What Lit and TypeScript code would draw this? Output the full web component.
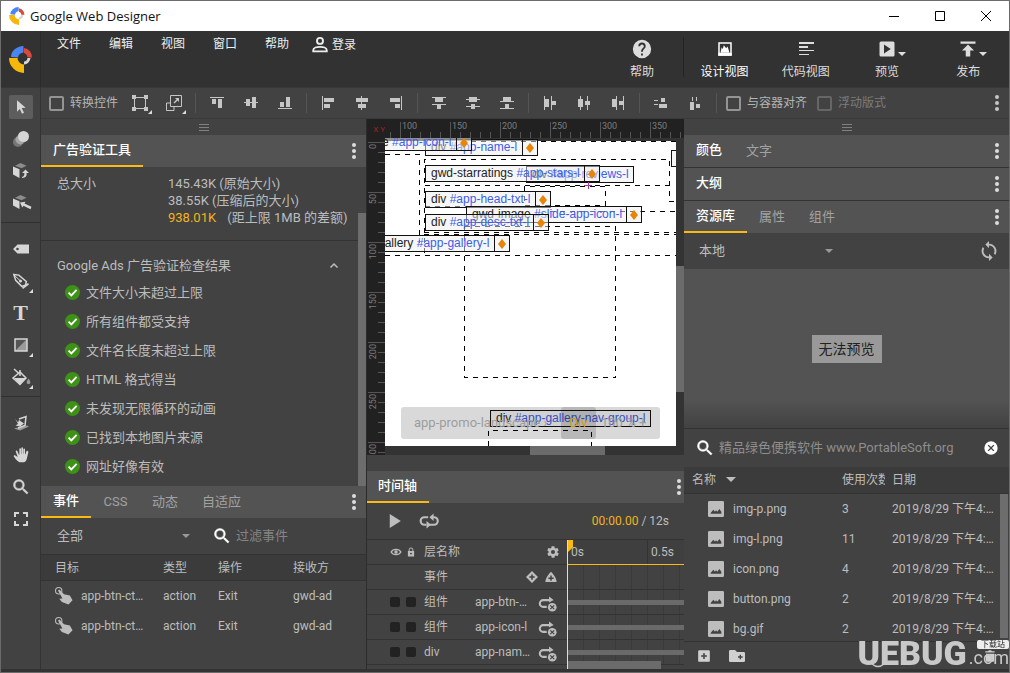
import { LitElement, html, svg, css, nothing } from "lit";
import { customElement, state } from "lit/decorators.js";

const block = (d: string) => svg`<path d=${d} shape-rendering="crispEdges"></path>`;

const glyphs16: Record<string, unknown> = {
  alignTop: block("M1 2h14v1H1zM3 4h4v5H3zM9 4h4v9H9z"),
  alignMiddle: block("M1 7h14v1H1zM3 4h4v7H3zM9 2h4v11H9z"),
  alignBottom: block("M1 13h14v1H1zM3 7h4v5H3zM9 2h4v10H9z"),
  alignLeft: block("M2 1h1v14H2zM4 3h10v4H4zM4 9h6v4H4z"),
  alignCenter: block("M7 1h1v14H7zM2 3h12v4H2zM4 9h8v4H4z"),
  alignRight: block("M13 1h1v14h-1zM2 3h10v4H2zM7 9h5v4H7z"),
  distTop: block("M1 2h14v1H1zM4 3h8v4H4zM1 9h14v1H1zM6 10h4v4H6z"),
  distMiddle: block("M1 4h14v1H1zM4 2h8v5H4zM1 11h14v1H1zM6 9h4v5H6z"),
  distBottom: block("M4 2h8v4H4zM1 6h14v1H1zM6 9h4v4H6zM1 13h14v1H1z"),
  distLeft: block("M2 1h1v14H2zM3 4h4v8H3zM9 1h1v14H9zM10 6h4v4h-4z"),
  distCenter: block("M4 1h1v14H4zM2 4h5v8H2zM11 1h1v14h-1zM9 6h5v4H9z"),
  distRight: block("M2 4h4v8H2zM6 1h1v14H6zM9 6h4v4H9zM13 1h1v14h-1z"),
  spaceV: block("M1 5h4v1H1zM1 9h4v1H1zM8 3h4v4H8zM6 9h8v4H6z"),
  spaceH: block("M3 7h4v8H3zM9 9h4v4H9zM5 2h1v4H5zM9 2h1v4H9z"),
  transform: svg`<path d="M2.500 2.500h11v11h-11z" fill="none" stroke="currentColor"></path>${block("M0 0h4v4H0zM12 0h4v4h-4zM0 12h4v4H0zM12 12h4v4h-4z")}`,
  resize: svg`<path d="M4.500.5h11v11h-11zM4.500 8H.5v7.500H8v-4" fill="none" stroke="currentColor"></path><path d="M9 3h4v4l-1.500-1.500L8.500 8.500l-1-1 3-3z"></path>`,
  gradient: svg`<path d="M2 2h12v12H2z" fill="#555" stroke="currentColor" stroke-width="1.500"></path><path d="M14 2v12H2z" opacity=".55"></path>`,
  fullscreen: svg`<path d="M2 6V2h4M10 2h4v4M14 10v4h-4M6 14H2v-4" fill="none" stroke="currentColor" stroke-width="2"></path>`,
  ball: svg`<circle cx="5" cy="11" r="5" opacity=".35"></circle><circle cx="7.500" cy="8.500" r="5" opacity=".5"></circle><circle cx="10.500" cy="5.500" r="5.500"></circle>`,
  cube: svg`<path d="M7.500 0l6 2.700-5 2.500L2 2.700z" opacity=".5"></path><path d="M0 3.500l6.500 2.700V15L0 11.500z"></path><path d="M9 15c4-.2 5-2 4.500-5H16l-3.500-3.500L9 10h2.300c.3 2-.3 3.500-2.300 4z"></path>`,
  cubeArrow: svg`<path d="M7.500 0l6 2.700-5 2.500L2 2.700z" opacity=".5"></path><path d="M0 3.500l6.500 2.700V14L0 10.500z"></path><path d="M7 7.500l5.500-.8-1 1.800 7 3.300-1 2.500-7-3.500L9.300 12.500z"></path>`,
  tag: svg`<path d="M4.500 3.500H16v9H4.500L0 8zM4.500 6.700a1.300 1.300 0 100 2.600 1.300 1.300 0 000-2.600z" fill-rule="evenodd"></path>`,
  pen: svg`<path d="M.8 1.500l5 .6 7.500 6.400-.6 3.400-4 1.500-6-6z" fill="none" stroke="currentColor" stroke-width="1.500"></path><path d="M1 2l6 5.500" stroke="currentColor"></path><circle cx="7.500" cy="8" r="1.500"></circle><path d="M9 14.500l6-4.500 1 1.500-6 4.500z"></path>`,
  bucket: svg`<path d="M1 0l5.500 5M7 3l6 6-6 6.500L0 9z" fill="none" stroke="currentColor" stroke-width="1.500"></path><path d="M1 9h12l-6 6.500z"></path><path d="M7 1v6" stroke="currentColor" stroke-width="1.500"></path><path d="M15.500 9.500c3 4 1.800 5.500 0 5.500s-3-1.500 0-5.500z" opacity=".6"></path>`,
  threeD: svg`<path d="M6 4l7-2.500-1 9L5 13" fill="none" stroke="currentColor" stroke-width="1.500"></path><path d="M2 3.500l3 4 1-2.500 5 3.500-4 3-4.500-1L5 9z"></path><path d="M1 13.500l4-1 9-2 2 1-9 4z" opacity=".6"></path>`,
  check: svg`<circle cx="8" cy="8" r="8" fill="#3d9116"></circle><path d="M3.800 8.200l3 3 5.600-6" fill="none" stroke="#fff" stroke-width="2"></path>`,
  tap: svg`<circle cx="3.500" cy="3.500" r="3" fill="none" stroke="currentColor"></circle><path d="M2.800 3.200l1.400-.8 4.300 4.400L14 8l2.500 4.500-3.800 4-6.200-2.500-2.500-3 3-.2z"></path>`,
  eye: svg`<path d="M1.500 8C4 3.300 12 3.300 14.500 8 12 12.700 4 12.700 1.500 8z" fill="none" stroke="currentColor" stroke-width="1.800"></path><circle cx="8" cy="8" r="2.300"></circle>`,
  lock: svg`<path d="M5 7V4.500a3 3 0 016 0V7" fill="none" stroke="currentColor" stroke-width="1.600"></path><path d="M3 6.500h10V15H3zM8 9a1.500 1.500 0 100 3 1.500 1.500 0 000-3z" fill-rule="evenodd"></path>`,
  diamondAdd: svg`<path d="M8 0l8 8-8 8-8-8zM7 4.500V7H4.500v2H7v2.500h2V9h2.500V7H9V4.500z" fill-rule="evenodd"></path>`,
  cloudAdd: svg`<path d="M8 1c2 2 7 7.500 7.500 13.500H.5C1 8.500 6 3 8 1zM7 6v2.500H4.500v2H7V13h2v-2.500h2.500v-2H9V6z" fill-rule="evenodd"></path>`,
};

const glyphs24: Record<string, unknown> = {
  search: svg`<path d="M15.500 14h-.8l-.3-.3A6.500 6.500 0 0016 9.500 6.500 6.500 0 109.500 16c1.600 0 3.100-.6 4.200-1.600l.3.300v.8l5 5 1.500-1.500-5-5zm-6 0a4.500 4.500 0 110-9 4.500 4.500 0 010 9z" stroke="currentColor" stroke-width=".6"></path>`,
  help: svg`<path d="M12 2a10 10 0 100 20 10 10 0 000-20zm1 17h-2v-2h2v2zm2.070-7.750l-.9.920C13.450 12.900 13 13.500 13 15h-2v-.5c0-1.100.45-2.100 1.170-2.830l1.240-1.260c.37-.36.590-.86.590-1.410a2 2 0 10-4 0H8a4 4 0 118 0c0 .880-.36 1.680-.93 2.250z"></path>`,
  person: svg`<path d="M3 20.500v-1.500c0-3 5-4.500 9-4.500s9 1.500 9 4.500v1.500z" fill="none" stroke="currentColor" stroke-width="2.500"></path><circle cx="12" cy="6.500" r="4" fill="none" stroke="currentColor" stroke-width="2.500"></circle>`,
  design: svg`<path d="M3 3h18v18H3zM5 5v14h14V5z" fill-rule="evenodd"></path><path d="M6 17l1.500-7L9 12l1.500-5 3 4 2-2.500L18 17z"></path><path d="M3 17h18v4H3z"></path>`,
  code: block("M2 3h20v2H2zM2 8h13v2H2zM2 13h20v2H2zM2 18h14v2H2z"),
  play: svg`<path d="M4 2h16a2 2 0 012 2v16a2 2 0 01-2 2H4a2 2 0 01-2-2V4a2 2 0 012-2zm4 4v12l9-6z" fill-rule="evenodd"></path>`,
  publish: svg`<path d="M2 2h20v3H2zM4 14h5v8h6v-8h5l-8-8z"></path>`,
  cursor: svg`<path d="M6 2l13 11-6 .5 3.500 7-3 1.500-3.200-7L6 19z"></path>`,
  hand: svg`<path d="M22 6c-.8-.5-1.700-.2-2 .6L18.500 11H18V3.500c0-1.700-2.400-1.700-2.500 0V10H15V1.800c0-1.800-2.500-1.800-2.500 0V10H12V3c0-1.700-2.500-1.700-2.500 0v8.500H9L6.500 6c-.7-1.600-3-.7-2.300 1L7 15l-4-2.500c-1.200-.7-2.500.7-1.700 1.800C4 18 7 23 11.500 23H15c4 0 5.500-3.500 6-6.500l2-8.500c.2-.9-.2-1.600-1-2z"></path>`,
  playSolid: svg`<path d="M3 0v24l19-12z"></path>`,
  loop: svg`<path d="M11 7.500H6.500a4.300 4.300 0 000 9H9M13 16.500h5a4.300 4.300 0 000-9H16" fill="none" stroke="currentColor" stroke-width="2.600"></path><path d="M8 12l5.500 4.500L8 21zM16.500 3v9L11.500 7.500z" transform="translate(1 0)"></path>`,
  gear: svg`<path d="M19.400 13c0-.3.100-.6.100-1s0-.7-.1-1l2.100-1.600c.2-.2.2-.4.100-.6l-2-3.500c-.1-.2-.4-.3-.6-.2l-2.500 1c-.5-.4-1.100-.7-1.700-1L14.500 2.400c0-.2-.2-.4-.5-.4h-4c-.2 0-.5.200-.5.400L9.100 5.100c-.6.200-1.200.6-1.700 1l-2.500-1c-.2-.1-.5 0-.6.200l-2 3.500c-.1.200-.1.500.1.600L4.600 11c-.1.700-.1 1.300 0 2l-2.100 1.600c-.2.200-.2.400-.1.600l2 3.500c.1.200.4.300.6.200l2.500-1c.5.400 1.100.7 1.700 1l.4 2.700c0 .2.200.4.500.4h4c.2 0 .5-.2.500-.4l.4-2.700c.6-.2 1.200-.6 1.700-1l2.500 1c.2.100.5 0 .6-.2l2-3.500c.1-.2.100-.5-.1-.6zM12 15.500a3.500 3.500 0 110-7 3.500 3.500 0 010 7z" fill-rule="evenodd"></path>`,
  unlink: svg`<path d="M11 17.500H6.500a4 4 0 010-8.500H16" fill="none" stroke="currentColor" stroke-width="2.600"></path><path d="M14 4.500L20 9h-6z"></path><path d="M14 5l5 4-5 3z"></path><circle cx="18" cy="18" r="5.500"></circle><path d="M15.500 15.500l5 5m0-5l-5 5" stroke="#424242" stroke-width="1.400"></path>`,
  sync: svg`<path d="M12 4V1L8 5l4 4V6a6 6 0 015.300 8.800l1.500 1.500A8 8 0 0012 4zm0 14a6 6 0 01-5.300-8.800L5.200 7.700A8 8 0 0012 20v3l4-4-4-4z"></path>`,
  clear: svg`<path d="M12 2a10 10 0 100 20 10 10 0 000-20zm5 13.600L15.600 17 12 13.400 8.400 17 7 15.600l3.600-3.600L7 8.400 8.400 7l3.600 3.600L15.600 7 17 8.400 13.400 12z"></path>`,
  image: svg`<path d="M2 0h20a2 2 0 012 2v20a2 2 0 01-2 2H2a2 2 0 01-2-2V2a2 2 0 012-2zM4 19h16v-3l-3-4-3 4-2-2-1.500 2L8 13l-4 5z" fill-rule="evenodd"></path>`,
  add: svg`<path d="M4 2h16a2 2 0 012 2v16a2 2 0 01-2 2H4a2 2 0 01-2-2V4a2 2 0 012-2zm6.700 5v3.700H7v2.600h3.700V17h2.600v-3.700H17v-2.600h-3.700V7z" fill-rule="evenodd"></path>`,
  folder: svg`<path d="M2 3h7l3 3h10a2 2 0 012 2v11a2 2 0 01-2 2H2a2 2 0 01-2-2V5a2 2 0 012-2zm14 7v2.500h-2.500v2H16V17h2v-2.500h2.500v-2H18V10z" fill-rule="evenodd"></path>`,
  trash: svg`<path d="M5 8h14v12a2 2 0 01-2 2H7a2 2 0 01-2-2zM20 4h-5l-1-2h-4L9 4H4v2h16z"></path>`,
};

const icon = (name: string, size = 16) => {
  const small = name in glyphs16;
  return html`<svg class="icon" width=${size} height=${size} viewBox=${small ? "0 0 16 16" : "0 0 24 24"} fill="currentColor" aria-hidden="true">${small ? glyphs16[name] : glyphs24[name]}</svg>`;
};

const logo = (w: number, h: number) => html`<svg class="icon" width=${w} height=${h} viewBox="0 0 24 27" aria-hidden="true">
  <path d="M2 11A13 11 0 0 1 14.500 0V6.500A6 6 0 0 0 9 11.500z" fill="#4a86f0"></path>
  <path d="M15 2A9 9 0 0 1 23 11.500H18.500A5 5 0 0 0 15 7z" fill="#dd4839"></path>
  <path d="M18.500 12H21.500A7 7 0 0 1 15 18.500V15.500A4 4 0 0 0 18.500 12z" fill="#d5d5d5"></path>
  <path d="M0 12H8.500A6.500 6.500 0 0 0 15 18.500V27A15 15 0 0 1 0 12z" fill="#f5b80a"></path></svg>`;

const toolGroups = [
  [["选择", "cursor"], ["动作路径", "ball"], ["3D 旋转", "cube"], ["3D 平移", "cubeArrow"]],
  [["标记", "tag"], ["钢笔", "pen", "more"], ["文本", "T"], ["形状", "gradient", "more"], ["填充", "bucket", "more"]],
  [["3D 舞台", "threeD"], ["手形", "hand"], ["缩放", "search"], ["全屏", "fullscreen"]],
];

const alignGroups = [
  ["alignTop", "alignMiddle", "alignBottom"],
  ["alignLeft", "alignCenter", "alignRight"],
  ["distTop", "distMiddle", "distBottom"],
  ["distLeft", "distCenter", "distRight"],
  ["spaceV", "spaceH"],
];

const checks = ["文件大小未超过上限", "所有组件都受支持", "文件名长度未超过上限", "HTML 格式得当", "未发现无限循环的动画", "已找到本地图片来源", "网址好像有效"];

const files = [["img-p.png", 3], ["img-l.png", 11], ["icon.png", 4], ["button.png", 2], ["bg.gif", 2]];

const layers = [["组件", "app-btn-cta-l"], ["组件", "app-icon-l"], ["div", "app-name-l"]];

/* Element tags on the stage; x is the left edge and w the width of the name cell. */
const tags: { x: number; y: number; w: number; tag: string; id: string; key?: boolean }[] = [
  { x: 40, y: 1, w: 97, tag: "div", id: "#app-name-l", key: true },
  { x: -61, y: -4, w: 132, tag: "gwd-image", id: "#app-icon-l", key: true },
  { x: 141, y: 28, w: 108, tag: "div", id: "#app-reviews-l" },
  { x: 40, y: 27, w: 159, tag: "gwd-starratings", id: "#app-stars-l", key: true },
  { x: 40, y: 53, w: 110, tag: "div", id: "#app-head-txt-l", key: true },
  { x: 81, y: 68, w: 160, tag: "gwd-image", id: "#slide-app-icon-l", key: true },
  { x: 40, y: 76, w: 108, tag: "div", id: "#app-desc-txt-l", key: true },
  { x: -39, y: 97, w: 148, tag: "gwd-gallery", id: "#app-gallery-l", key: true },
  { x: 105, y: 272, w: 161, tag: "div", id: "#app-gallery-nav-group-l" },
  { x: 286, y: 12, w: 60, tag: "", id: "" },
];

const range = (n: number) => Array.from({ length: n }, (_, i) => i);

@customElement("app-root")
export class AppRoot extends LitElement {
  @state() private tool = "选择";

  static styles = css`
    :host {
      display: flex; flex-direction: column; height: 100vh; min-height: 600px; box-sizing: border-box;
      border: 1px solid #6b6b6b; padding-bottom: 3px; overflow: hidden; background: #333;
      color: #bdbdbd; font: 12px/16px Roboto, "Noto Sans CJK SC", sans-serif;
    }
    * { box-sizing: border-box; }
    button, input, select { font: inherit; color: inherit; background: none; border: 0; padding: 0; margin: 0; border-radius: 0; }
    button { display: flex; align-items: center; justify-content: center; }
    input:focus, select:focus { outline: none; }
    .icon { display: block; flex: none; overflow: visible; }
    ul { list-style: none; margin: 0; padding: 0; }
    h1, h2 { margin: 0; font: inherit; }

    .titlebar { display: flex; align-items: center; height: 30px; flex: none; background: #fff; color: #111; padding-left: 8px; font: 13px/30px "Open Sans", sans-serif; }
    .titlebar h1 { flex: 1; margin-left: 5px; }
    .titlebar button { width: 46px; height: 30px; }

    .header { display: flex; height: 56px; flex: none; background: #323232; color: #eee; }
    .brand { width: 40px; display: flex; align-items: center; justify-content: center; border-right: 1px solid #2a2a2a; }
    .menu { display: flex; flex: 1; padding: 3px 0 0 3px; align-items: flex-start; }
    .menu button { height: 20px; padding: 0 14px 0 12px; width: 52px; white-space: nowrap; }
    .menu .login { width: auto; gap: 3px; height: 22px; padding-left: 7px; }
    .view { flex-direction: column; width: 82px; gap: 5px; padding-top: 1px; color: #ddd; }
    .view.on { color: #fff; }
    .glyph { display: flex; height: 20px; align-items: center; position: relative; }
    .glyph .drop { position: absolute; left: 20px; top: 13px; }
    .drop { width: 0; border: 4px solid transparent; border-top-color: currentColor; border-bottom: 0; flex: none; }
    .views { display: flex; width: 325px; }
    .views .view { flex: 1; width: auto; }
    .rule { width: 1px; background: #242424; margin: 6px 0 10px; }

    .workspace { display: grid; grid-template-columns: 40px minmax(0, 1fr); flex: 1; min-height: 0; background: #424242; }
    .tools { border-right: 1px solid #333; border-top: 1px solid #373737; min-height: 0; overflow: hidden; color: #d6d6d6; }
    .group { display: flex; flex-direction: column; align-items: center; padding: 3px 0; }
    .group + .group { border-top: 1px solid #303030; padding: 10px 0 3px; }
    .tool { position: relative; width: 24px; height: 24px; margin: 4px 0; border-radius: 2px; }
    .tool.on { background: #5d5d5d; }
    .tool.more::after { content: ""; position: absolute; right: 0; bottom: 0; border: 2px solid; border-color: transparent #ddd #ddd transparent; }
    .serif { font: bold 22px/24px "Liberation Serif", serif; }
    .main { display: flex; flex-direction: column; min-width: 0; min-height: 0; }

    .toolbar { display: flex; align-items: center; height: 32px; flex: none; border-top: 1px solid #383838; border-bottom: 1px solid #3a3a3a; color: #c6c6c6; padding-right: 5px; }
    .toolbar label { display: flex; align-items: center; gap: 6px; white-space: nowrap; padding-left: 10px; color: #b5b5b5; }
    .toolbar label.first { width: 82px; padding-left: 8px; }
    .toolbar label.near { padding-left: 5px; }
    .toolbar label.off { color: #7c7c7c; }
    .toolbar input { appearance: none; width: 15px; height: 15px; border: 2px solid #949494; border-radius: 2px; flex: none; }
    .toolbar label.off input { border-color: #666; }
    .toolbar button { width: 34px; height: 30px; position: relative; flex: none; }
    .corner::after { content: ""; position: absolute; right: 5px; bottom: 4px; border: 2px solid; border-color: transparent #ddd #ddd transparent; }
    .sep { width: 9px; height: 20px; flex: none; background: linear-gradient(#555, #555) 4px 0 / 1px 100% no-repeat; }
    .toolbar .dots, .tabs .dots { margin-left: auto; width: 14px; }

    .panels { display: grid; grid-template-columns: 325px minmax(0, 1fr) 325px; flex: 1; min-height: 0; }
    .col { display: flex; flex-direction: column; min-height: 0; min-width: 0; }
    .center { border-left: 1px solid #2c2c2c; }
    .grip { height: 16px; flex: none; display: flex; align-items: center; justify-content: center; color: #808080; }
    .tabs { display: flex; height: 32px; flex: none; background: #535353; padding-right: 5px; font-size: 13px; }
    .tabs + .tabs { border-top: 1px solid #333; height: 33px; }
    .tabs button { color: #a2a2a2; padding: 0 12px; min-width: 49px; white-space: nowrap; }
    .tabs .on { color: #fff; font-weight: 500; border-bottom: 2px solid #fdb913; }
    .tabs.plain .on { border-color: transparent; }
    .tabs .dots { padding: 0; min-width: 0; color: #ddd; }

    .verify { display: flex; flex: 1; min-height: 0; font-size: 13px; overflow: hidden; }
    .scroller { flex: 1; min-width: 0; }
    .bar { width: 8px; flex: none; background: #6d6d6d; margin-top: 46px; }
    .sizes { display: grid; grid-template-columns: 111px 1fr; margin: 0; padding: 8px 0 14px 16px; line-height: 17px; border-bottom: 1px solid #333; white-space: nowrap; }
    .sizes dd { margin: 0; }
    .warn { color: #f0b41c; }
    .warn + span { margin-left: 8px; }
    .section { display: flex; align-items: center; justify-content: space-between; height: 37px; padding: 12px 20px 0 16px; }
    .checks li { display: flex; align-items: center; gap: 6px; height: 29px; padding-left: 24px; }
    .events { flex: none; height: 183px; }
    .filter { display: flex; align-items: center; height: 36px; flex: none; padding: 0 18px 0 16px; font-size: 13px; }
    .pick { display: flex; align-items: center; width: 133px; flex: none; }
    .pick select { appearance: none; flex: 1; width: 100%; margin-right: -8px; }
    .pick .drop { pointer-events: none; color: #999; }
    .find { display: flex; align-items: center; flex: 1; min-width: 0; gap: 4px; color: #fff; margin-left: 22px; }
    .find input { flex: 1; width: 0; min-width: 0; color: #8e8e8e; }
    .find input::placeholder { color: #858585; opacity: 1; }

    table { border-collapse: collapse; table-layout: fixed; width: 100%; flex: none; }
    th { font-weight: normal; text-align: left; padding: 0; height: 26px; background: #3b3b3b; border-bottom: 1px solid #333; white-space: nowrap; overflow: hidden; }
    td { padding: 0; height: 30px; white-space: nowrap; overflow: hidden; text-overflow: ellipsis; }
    .events table { border-top: 1px solid #333; }
    .events th:first-child, .events td:first-child { padding-left: 14px; width: 122px; }
    .c55 { width: 55px; } .c75 { width: 75px; }
    .cell { display: flex; align-items: center; gap: 9px; }
    .name { overflow: hidden; text-overflow: ellipsis; white-space: nowrap; }
    .events .name { width: 64px; }

    .stage { display: grid; grid-template: 19px minmax(0, 1fr) 9px / 18px minmax(0, 1fr) 8px; flex: 1; min-height: 0; background: #333; }
    .origin { background: #212121; color: #a32222; font-size: 8px; line-height: 22px; text-align: right; }
    .ruler { background: #212121; overflow: hidden; }
    .ruler.top { grid-column: 2 / 4; }
    .ruler.side { grid-row: 2 / 4; }
    .ruler svg { display: block; }
    .ruler text { font: 9px Roboto, sans-serif; fill: #7d7d7d; }
    .tick { stroke: #555; shape-rendering: crispEdges; }
    .canvas { position: relative; overflow: hidden; background: linear-gradient(#333 3px, #fff 3px); }
    .outline { position: absolute; left: 0; top: 0; fill: none; stroke: #000; stroke-dasharray: 5 5; shape-rendering: crispEdges; }
    .cross { stroke: #a03aa0; stroke-dasharray: none; }
    .tag { position: absolute; display: flex; height: 17px; border: 1px solid #111; background: rgba(238, 238, 238, .5); font: 12px/15px "Liberation Sans", sans-serif; color: #222; white-space: nowrap; }
    .tag .text { flex: 1; padding-left: 5px; }
    .tag em { font-style: normal; color: #3c5ee8; }
    .tag .key { width: 15px; border-left: 1px solid #111; display: flex; align-items: center; justify-content: center; color: #e88407; }
    .crumbs { position: absolute; left: 16px; right: 16px; bottom: 7px; height: 32px; display: flex; align-items: center; background: rgba(0, 0, 0, .15); border-radius: 3px; color: #9d9d9d; font-size: 13px; padding-left: 13px; white-space: nowrap; }
    .crumbs .path { width: 147px; }
    .crumbs .now { width: 35px; line-height: 32px; background: rgba(0, 0, 0, .15); text-align: center; color: #d59b12; border-radius: 3px; margin-right: 5px; }
    .vscroll { padding-top: 128px; }
    .vscroll i { display: block; height: 126px; background: #6b6b6b; }
    .hscroll { grid-column: 2 / 4; padding-left: 145px; }
    .hscroll i { display: block; height: 9px; width: 75px; background: #6b6b6b; }

    .timeline { height: 214px; flex: none; padding-top: 16px; overflow: hidden; }
    .timeline .tabs { padding-right: 0; }
    .timeline .tabs .on { padding-left: 11px; }
    .timeline .tabs .dots { width: 10px; }
    .transport { display: flex; align-items: center; height: 37px; flex: none; padding: 0 15px 0 21px; gap: 17px; border-bottom: 1px solid #333; }
    .time { margin-left: auto; }
    .tracks { display: grid; grid-template-columns: 200px minmax(0, 1fr); flex: 1; min-height: 0; overflow: hidden; }
    .layer { display: grid; grid-template-columns: 16px 18px 51px 57px 1fr; align-items: center; height: 25px; padding: 0 10px 0 23px; border-bottom: 1px solid #333; }
    .layer.wide { grid-template-columns: 16px 18px 1fr auto; padding-right: 7px; }
    .acts { display: flex; gap: 7px; padding-right: 3px; }
    .box { width: 10px; height: 10px; border-radius: 2px; background: #222; }
    .layer .name { width: 57px; }
    .layer > :last-child { justify-self: end; }
    .lanes { position: relative; overflow: hidden; border-left: 1px solid #ddd; }
    .scale { display: flex; height: 25px; border-bottom: 1px solid #fdb913; line-height: 24px; padding-left: 3px; background: linear-gradient(#333, #333) 79px 0 / 1px 100% no-repeat #3f3f3f; }
    .scale span { width: 80px; flex: none; }
    .lane { display: flex; align-items: center; height: 25px; border-bottom: 1px solid #333; background: repeating-linear-gradient(90deg, transparent 0 15px, #3a3a3a 15px 16px); }
    .lane i { flex: 1; height: 5px; background: #6a6a6a; margin-top: 1px; }
    .playhead { position: absolute; left: 0; top: 0; width: 5px; height: 12px; background: #fdb913; clip-path: polygon(0 0, 100% 0, 100% 60%, 0 100%); }
    .lanes .thumb { position: absolute; left: 0; bottom: 0; height: 8px; width: 93px; background: #6b6b6b; }

    .source { display: flex; align-items: center; height: 36px; flex: none; padding: 0 9px 0 15px; font-size: 13px; justify-content: space-between; }
    .source .pick { width: 134px; }
    .preview { display: flex; align-items: center; justify-content: center; height: 160px; flex: none; background: linear-gradient(#535353 82%, #424242); border-bottom: 1px solid #333; }
    .preview span { background: #999; color: #222; font-size: 14px; line-height: 28px; padding: 0 7px; }
    .lookup { display: flex; align-items: center; height: 38px; flex: none; padding: 0 10px 0 11px; font-size: 13px; }
    .lookup .find { margin: 0; }
    .lookup button { color: #fff; }
    .files { flex: 1; min-height: 0; display: flex; flex-direction: column; overflow: hidden; }
    .files .cname { width: 158px; } .files .cuse { width: 43px; } .files .cgap { width: 7px; }
    .files th:first-child { padding-left: 8px; }
    .files td:first-child { padding-left: 24px; }
    .files .drop { border-width: 5px 5px 0; margin-left: 1px; }
    .rows { display: flex; flex: 1; min-height: 0; overflow: hidden; }
    .rows table { flex: 1; width: 0; align-self: flex-start; }
    .rows i { width: 8px; margin: 0 1px 3px 0; background: #6d6d6d; }
    .rows .cdate { padding-right: 6px; }
    .footer { display: flex; align-items: center; height: 28px; flex: none; border-top: 1px solid #333; gap: 18px; padding: 0 12px 0 13px; color: #d0d0d0; }
    .footer button:last-child { margin-left: auto; }
    .watermark { position: fixed; right: 1px; bottom: 6px; display: flex; align-items: flex-end; gap: 2px; height: 30px; color: #c9c9c9; pointer-events: none; }
    .watermark b { font: 900 34px/28px Roboto, sans-serif; }
    .suffix { display: flex; flex-direction: column; align-items: flex-end; }
    .suffix small { background: #eee; color: #222; font-size: 8px; line-height: 9px; padding: 0 4px; border-radius: 2px; }
    .suffix span { font: 18px/18px Roboto, sans-serif; }
    .smile { position: absolute; left: 14px; bottom: -1px; fill: none; stroke: #c9c9c9; }
  `;

  private dots(label = "更多选项") {
    return html`<button class="dots" aria-label=${label}><svg class="icon" width="4" height="16" fill="currentColor"><circle cx="2" cy="2" r="2"></circle><circle cx="2" cy="8" r="2"></circle><circle cx="2" cy="14" r="2"></circle></svg></button>`;
  }

  private tabs(names: string[], plain = false) {
    return html`<div class="tabs ${plain ? "plain" : ""}" role="tablist">
      ${names.map((n, i) => html`<button role="tab" aria-selected=${i === 0 ? "true" : "false"} class=${i === 0 ? "on" : ""}>${n}</button>`)}${this.dots()}</div>`;
  }

  private grip() {
    return html`<div class="grip"><svg class="icon" width="10" height="7"><path d="M0 .5h10M0 3.500h10M0 6.500h10" stroke="currentColor" shape-rendering="crispEdges"></path></svg></div>`;
  }

  private view(label: string, name: string, size: number, on = false, drop = false) {
    return html`<button class="view ${on ? "on" : ""}"><span class="glyph">${icon(name, size)}${drop ? html`<i class="drop"></i>` : nothing}</span>${label}</button>`;
  }

  private leftColumn() {
    return html`<section class="col">
      ${this.grip()}${this.tabs(["广告验证工具"])}
      <div class="verify">
        <div class="scroller">
          <dl class="sizes">
            <dt>总大小</dt>
            <dd>145.43K (原始大小)<br>38.55K (压缩后的大小)<br><span class="warn">938.01K</span><span> (距上限 1MB 的差额)</span></dd>
          </dl>
          <h2 class="section">Google Ads 广告验证检查结果
            <svg class="icon" width="8" height="5"><path d="M.5 4.500L4 1l3.500 3.500" fill="none" stroke="currentColor" stroke-width="1.500"></path></svg></h2>
          <ul class="checks">${checks.map((c) => html`<li>${icon("check", 15)}<span>${c}</span></li>`)}</ul>
        </div>
        <div class="bar"></div>
      </div>
      <div class="col events">
        ${this.tabs(["事件", "CSS", "动态", "自适应"])}
        <div class="filter">
          <span class="pick"><select aria-label="事件范围"><option>全部</option></select><i class="drop"></i></span>
          <label class="find">${icon("search", 20)}<input type="text" aria-label="过滤事件" placeholder="过滤事件"></label>
        </div>
        <table>
          <thead><tr><th>目标</th><th class="c55">类型</th><th class="c75">操作</th><th>接收方</th></tr></thead>
          <tbody>${range(2).map(() => html`<tr><td><span class="cell">${icon("tap", 17)}<span class="name">app-btn-cta-l</span></span></td><td>action</td><td>Exit</td><td>gwd-ad</td></tr>`)}</tbody>
        </table>
      </div>
    </section>`;
  }

  private stage() {
    return html`<div class="stage">
      <div class="origin">X Y</div>
      <div class="ruler top"><svg width="100%" height="19">
        ${range(60).map((i) => { const x = 5.5 + i * 10; return svg`<path class="tick" d="M${x} ${i % 5 === 1 ? 3 : 13}V19"></path>`; })}
        ${range(6).map((i) => svg`<text x=${17 + i * 50} y="10">${100 + i * 50}</text>`)}</svg></div>
      <div class="ruler side"><svg width="18" height="100%">
        ${range(60).map((i) => { const y = 4.5 + i * 10; return svg`<path class="tick" d="M${i % 5 === 0 ? 1 : 11} ${y}H18"></path>`; })}
        ${range(7).map((i) => svg`<text transform="translate(9 ${6 + i * 50}) rotate(-90)" text-anchor="end">${i * 50}</text>`)}</svg></div>
      <div class="canvas">
        <svg class="outline" width="291" height="308" viewBox="385 138 291 308">
          <path d="M471 141.500H676M385 154.500H419.500V243M424.500 253V159.500H669.500V201.500H676M424.500 185.500H669M524.500 186V205.500H605.500V186.500H524M425 206.500H524M550 211.500H676M464.500 226.500H615.500V377.500H464.500zM424 232.500H676M424 234.500H676M385 255.500H676M488.500 446V430.500H591.500V446"></path>
        </svg>
        ${tags.map((t) => html`<div class="tag" style="left:${t.x}px;top:${t.y}px;width:${t.w + (t.key ? 16 : 0)}px">
          <span class="text">${t.tag} <em>${t.id}</em></span>${t.key ? html`<span class="key"><svg class="icon" width="8" height="10" fill="currentColor"><path d="M4 0l4 5-4 5-4-5z"></path></svg></span>` : nothing}</div>`)}
        <svg class="outline" width="291" height="308" viewBox="385 138 291 308"><path class="cross" d="M584 185.500h8M588.500 182v7"></path></svg>
        <div class="crumbs"><span class="path">app-promo-landscape ›</span><span class="now">Div</span><span>100 % +</span></div>
      </div>
      <div class="vscroll"><i></i></div>
      <div class="hscroll"><i></i></div>
    </div>`;
  }

  private timeline() {
    return html`<section class="col timeline">
      ${this.tabs(["时间轴"])}
      <div class="transport">
        <button aria-label="播放">${icon("playSolid", 14)}</button>
        <button aria-label="循环">${icon("loop", 20)}</button>
        <span class="time"><span class="warn">00:00.00</span> / 12s</span>
      </div>
      <div class="tracks">
        <div>
          <div class="layer wide">${icon("eye", 12)}${icon("lock", 10)}<span>层名称</span>${icon("gear", 14)}</div>
          <div class="layer wide"><span></span><span></span><span>事件</span><span class="acts">${icon("diamondAdd", 12)}${icon("cloudAdd", 12)}</span></div>
          ${layers.map(([kind, name]) => html`<div class="layer"><i class="box"></i><i class="box"></i><span>${kind}</span><span class="name">${name}</span>${icon("unlink", 19)}</div>`)}
        </div>
        <div class="lanes">
          <div class="scale"><span>0s</span><span>0.5s</span></div>
          <div class="lane"></div>
          ${layers.map(() => html`<div class="lane"><i></i></div>`)}
          <i class="playhead"></i><i class="thumb"></i>
        </div>
      </div>
    </section>`;
  }

  private rightColumn() {
    return html`<section class="col">
      ${this.grip()}${this.tabs(["颜色", "文字"], true)}${this.tabs(["大纲"], true)}${this.tabs(["资源库", "属性", "组件"])}
      <div class="source">
        <span class="pick"><select aria-label="资源位置"><option>本地</option></select><i class="drop"></i></span>
        <button aria-label="刷新">${icon("sync", 22)}</button>
      </div>
      <div class="preview"><span>无法预览</span></div>
      <div class="lookup">
        <label class="find">${icon("search", 20)}<input type="text" aria-label="搜索资源" .value=${"精品绿色便携软件 www.PortableSoft.org"}></label>
        <button aria-label="清除">${icon("clear", 16)}</button>
      </div>
      <div class="files">
        <table><thead><tr><th class="cname"><span class="cell">名称<i class="drop"></i></span></th><th class="cuse">使用次数</th><th class="cgap"></th><th>日期</th></tr></thead></table>
        <div class="rows">
          <table><tbody>${files.map(([name, used]) => html`<tr><td class="cname"><span class="cell">${icon("image", 16)}${name}</span></td><td class="cuse">${used}</td><td class="cgap"></td><td class="cdate">2019/8/29 下午4:32:10</td></tr>`)}</tbody></table>
          <i></i>
        </div>
      </div>
      <div class="footer">
        <button aria-label="添加资源">${icon("add", 14)}</button>
        <button aria-label="新建文件夹">${icon("folder", 16)}</button>
        <button aria-label="删除">${icon("trash", 14)}</button>
      </div>
    </section>`;
  }

  render() {
    return html`
      <div class="titlebar">${logo(16, 18)}<h1>Google Web Designer</h1>
        <button aria-label="最小化"><svg class="icon" width="10" height="10"><path d="M0 5.500h10" stroke="#000"></path></svg></button>
        <button aria-label="最大化"><svg class="icon" width="10" height="10"><path d="M.5.5h9v9h-9z" stroke="#000" fill="none"></path></svg></button>
        <button aria-label="关闭"><svg class="icon" width="10" height="10"><path d="M0 0l10 10M10 0L0 10" stroke="#000"></path></svg></button>
      </div>
      <header class="header">
        <div class="brand">${logo(24, 27)}</div>
        <nav class="menu">${["文件", "编辑", "视图", "窗口", "帮助"].map((m) => html`<button>${m}</button>`)}
          <button class="login">${icon("person", 18)}登录</button></nav>
        ${this.view("帮助", "help", 22)}
        <div class="rule"></div>
        <div class="views">
          ${this.view("设计视图", "design", 18, true)}${this.view("代码视图", "code", 18)}${this.view("预览", "play", 18, false, true)}${this.view("发布", "publish", 18, false, true)}
        </div>
      </header>
      <div class="workspace">
        <nav class="tools">
          ${toolGroups.map((g) => html`<div class="group">${g.map(([label, name, more]) => html`<button class="tool ${this.tool === label ? "on" : ""} ${more ?? ""}" aria-label=${label} @click=${() => (this.tool = label)}>${name === "T" ? html`<span class="serif">T</span>` : icon(name, name === "search" ? 20 : 16)}</button>`)}</div>`)}
        </nav>
        <div class="main">
          <div class="toolbar">
            <label class="first"><input type="checkbox">转换控件</label>
            <button class="corner" aria-label="变形">${icon("transform")}</button><button class="corner" aria-label="缩放">${icon("resize")}</button>
            ${alignGroups.map((g) => html`<i class="sep"></i>${g.map((n) => html`<button aria-label=${n}>${icon(n)}</button>`)}`)}
            <i class="sep"></i>
            <label class="near"><input type="checkbox">与容器对齐</label>
            <label class="off"><input type="checkbox" disabled>浮动版式</label>
            ${this.dots()}
          </div>
          <div class="panels">
            ${this.leftColumn()}
            <section class="col center">${this.stage()}${this.timeline()}</section>
            ${this.rightColumn()}
          </div>
        </div>
      </div>
      <div class="watermark"><b>UEBUG</b><span class="suffix"><small>下载站</small><span>.com</span></span>
        <svg class="smile" width="14" height="5"><path d="M1 1q6 5 12 0" stroke-width="1.500"></path></svg></div>
    `;
  }
}
